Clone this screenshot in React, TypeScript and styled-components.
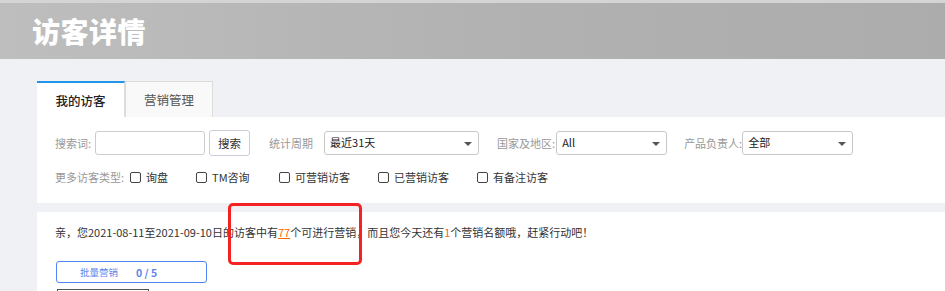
import React from 'react';
import styled, { createGlobalStyle } from 'styled-components';

const GlobalStyle = createGlobalStyle`
  body {
    margin: 0;
    background: #f0f1f5;
    font-family: "Noto Sans CJK SC", "Liberation Sans", sans-serif;
    font-size: 11px;
    color: #333;
  }
`;

const Header = styled.div`
  height: 56px;
  border-top: 3px solid #d4d4d4;
  background: linear-gradient(90deg, #bebebe 0%, #b2b2b2 50%, #acacac 100%);
  display: flex;
  align-items: center;
  padding-left: 32px;
`;

const Title = styled.h1`
  margin: 0;
  font-size: 28px;
  font-weight: 900;
  color: #fff;
  letter-spacing: 0.5px;
`;

const Main = styled.div`
  padding: 22px 0 0 37px;
  position: relative;
`;

const Tabs = styled.div`
  display: flex;
  height: 36px;
`;

const Tab = styled.div<{ $active?: boolean }>`
  width: 88px;
  box-sizing: border-box;
  display: flex;
  align-items: center;
  justify-content: center;
  font-size: 12.5px;
  font-weight: ${p => (p.$active ? 500 : 400)};
  color: ${p => (p.$active ? '#222' : '#555')};
  background: ${p => (p.$active ? '#fff' : '#f9f9f9')};
  border: 1px solid #dcdcdc;
  border-bottom: none;
  border-top: ${p => (p.$active ? '2px solid #2196e8' : '1px solid #dcdcdc')};
  border-left: ${p => (p.$active ? 'none' : '1px solid #dcdcdc')};
`;

const Panel = styled.div`
  background: #fff;
  padding: 14px 18px 0;
  height: 86px;
  box-sizing: border-box;
`;

const Row = styled.div<{ $h: number }>`
  display: flex;
  align-items: center;
  height: ${p => p.$h}px;
`;

const Label = styled.span<{ $ml?: number; $mr?: number }>`
  color: #999;
  white-space: nowrap;
  margin-left: ${p => p.$ml ?? 0}px;
  margin-right: ${p => p.$mr ?? 2}px;
`;

const Input = styled.div`
  width: 110px;
  height: 24px;
  box-sizing: border-box;
  border: 1px solid #ccc;
  border-radius: 3px;
`;

const SearchBtn = styled.div`
  margin-left: 4px;
  width: 41px;
  height: 26px;
  box-sizing: border-box;
  border: 1px solid #c9ced8;
  border-radius: 3px;
  display: flex;
  align-items: center;
  justify-content: center;
  font-size: 11.5px;
  color: #333;
`;

const Select = styled.div<{ $w: number }>`
  width: ${p => p.$w}px;
  height: 24px;
  box-sizing: border-box;
  border: 1px solid #c8c8c8;
  border-radius: 3px;
  display: flex;
  align-items: center;
  padding: 0 6px 2px 5px;
  justify-content: space-between;
  color: #222;
`;

const Caret = styled.span`
  width: 0;
  height: 0;
  border-left: 4px solid transparent;
  border-right: 4px solid transparent;
  border-top: 4px solid #555;
  margin-top: 3px;
`;

const Check = styled.label<{ $w: number }>`
  display: flex;
  align-items: center;
  width: ${p => p.$w}px;
  color: #333;
`;

const Box = styled.span`
  width: 9px;
  height: 9px;
  border: 1px solid #444;
  border-radius: 2px;
  margin-right: 5px;
`;

const Gap = styled.div`
  height: 9px;
`;

const Notice = styled.div`
  background: #fff;
  padding: 11px 18px 0;
  height: 90px;
  box-sizing: border-box;
`;

const Msg = styled.p`
  margin: 0;
  line-height: 18px;
  color: #333;
`;

const Hl = styled.span<{ $u?: boolean }>`
  color: #f60;
  text-decoration: ${p => (p.$u ? 'underline' : 'none')};
`;

const BatchBtn = styled.div`
  margin-top: 20px;
  margin-left: 1px;
  width: 151px;
  height: 22px;
  box-sizing: border-box;
  border: 1px solid #4f86f7;
  border-radius: 3px;
  color: #5b84ea;
  font-size: 9.5px;
  display: flex;
  align-items: center;
  padding-left: 23px;
  gap: 18px;
`;

const Count = styled.b`
  font-weight: 700;
  font-size: 10.5px;
`;

const Stub = styled.div`
  margin-top: 6px;
  margin-left: 2px;
  width: 90px;
  height: 10px;
  border: 1px solid #555;
  border-bottom: none;
`;

const Mark = styled.div`
  position: absolute;
  left: 228px;
  top: 144px;
  width: 134px;
  height: 62px;
  box-sizing: border-box;
  border: 3px solid #f42222;
  border-radius: 5px;
`;

export default function App() {
  return (
    <>
      <GlobalStyle />
      <Header>
        <Title>访客详情</Title>
      </Header>
      <Main>
        <Tabs>
          <Tab $active>我的访客</Tab>
          <Tab>营销管理</Tab>
        </Tabs>
        <Panel>
          <Row $h={24}>
            <Label $mr={4}>搜索词:</Label>
            <Input />
            <SearchBtn>搜索</SearchBtn>
            <Label $ml={19} $mr={11}>统计周期</Label>
            <Select $w={155}>
              <span>最近31天</span>
              <Caret />
            </Select>
            <Label $ml={18} $mr={1}>国家及地区:</Label>
            <Select $w={111}>
              <span>All</span>
              <Caret />
            </Select>
            <Label $ml={17} $mr={0}>产品负责人:</Label>
            <Select $w={111}>
              <span>全部</span>
              <Caret />
            </Select>
          </Row>
          <Row $h={44}>
            <Label $mr={6}>更多访客类型:</Label>
            <Check $w={66}><Box />询盘</Check>
            <Check $w={83}><Box />TM咨询</Check>
            <Check $w={99}><Box />可营销访客</Check>
            <Check $w={99}><Box />已营销访客</Check>
            <Check $w={99}><Box />有备注访客</Check>
          </Row>
        </Panel>
        <Gap />
        <Notice>
          <Msg>
            亲，您2021-08-11至2021-09-10日的访客中有<Hl $u>77</Hl>个可进行营销，而且您今天还有<Hl>1</Hl>个营销名额哦，赶紧行动吧！
          </Msg>
          <BatchBtn>
            <span>批量营销</span>
            <Count>0 / 5</Count>
          </BatchBtn>
          <Stub />
        </Notice>
        <Mark />
      </Main>
    </>
  );
}
